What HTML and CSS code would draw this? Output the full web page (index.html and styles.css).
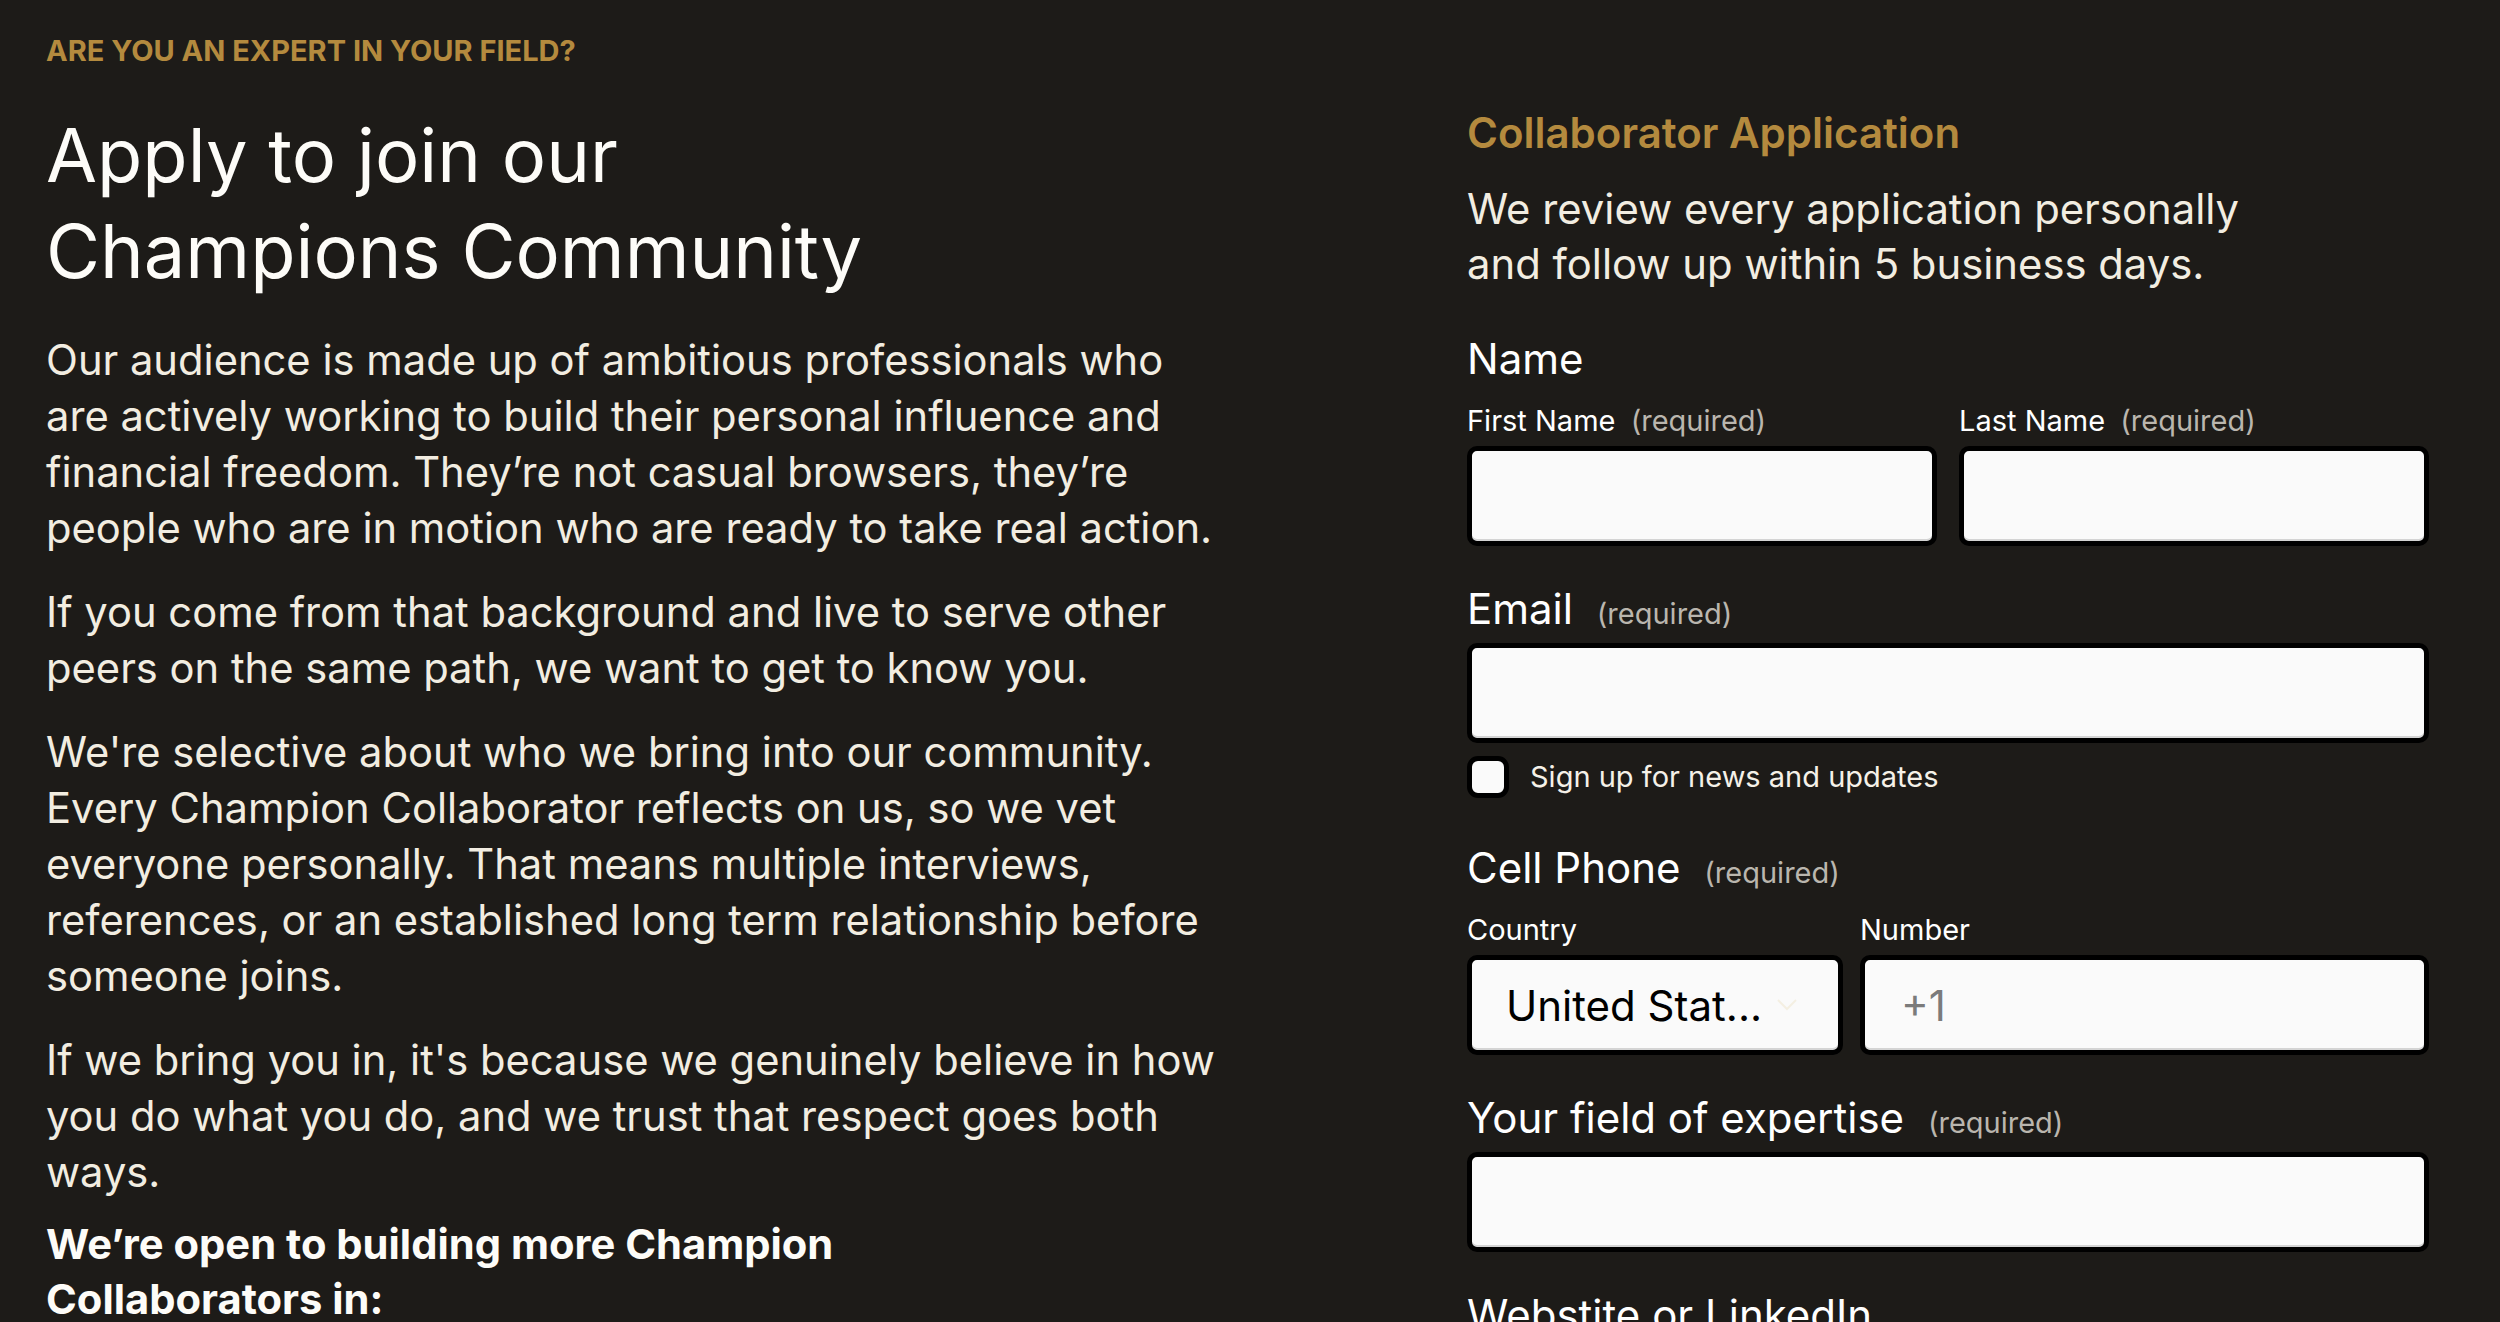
FILE: index.html
```html
<!DOCTYPE html>
<html lang="en">
<head>
<meta charset="utf-8">
<title>Apply to join our Champions Community</title>
<link rel="stylesheet" href="styles.css">
</head>
<body>
<main class="page">
  <section class="intro">
    <p class="eyebrow">ARE YOU AN EXPERT IN YOUR FIELD?</p>
    <h1 class="title">Apply to join our Champions Community</h1>
    <p class="copy">Our audience is made up of ambitious professionals who are actively working to build their personal influence and financial freedom. They’re not casual browsers, they’re people who are in motion who are ready to take real action.</p>
    <p class="copy">If you come from that background and live to serve other peers on the same path, we want to get to know you.</p>
    <p class="copy">We're selective about who we bring into our community. Every Champion Collaborator reflects on us, so we vet everyone personally. That means multiple interviews, references, or an established long term relationship before someone joins.</p>
    <p class="copy">If we bring you in, it's because we genuinely believe in how you do what you do, and we trust that respect goes both ways.</p>
    <h3 class="subhead">We’re open to building more Champion Collaborators in:</h3>
  </section>

  <section class="apply">
    <h2 class="apply-title">Collaborator Application</h2>
    <p class="apply-intro">We review every application personally and follow up within 5 business days.</p>

    <form class="form">
      <div class="field">
        <div class="field-label">Name</div>
        <div class="pair pair-name">
          <label class="sub">
            <span class="sub-label">First Name <span class="req">(required)</span></span>
            <input class="box" type="text">
          </label>
          <label class="sub">
            <span class="sub-label">Last Name <span class="req">(required)</span></span>
            <input class="box" type="text">
          </label>
        </div>
      </div>

      <div class="field">
        <label class="field-label" for="email">Email <span class="req">(required)</span></label>
        <input class="box" id="email" type="email">
        <label class="check">
          <span class="check-box"></span>
          <span class="check-text">Sign up for news and updates</span>
        </label>
      </div>

      <div class="field field-phone">
        <div class="field-label">Cell Phone <span class="req">(required)</span></div>
        <div class="pair pair-phone">
          <div class="sub">
            <span class="sub-label">Country</span>
            <div class="box select">
              <span class="select-text">United Stat...</span>
              <svg class="chev" width="22" height="14" viewBox="0 0 22 14" aria-hidden="true"><path d="M2 2l9 9 9-9" fill="none" stroke="#f4efe2" stroke-width="2"/></svg>
            </div>
          </div>
          <label class="sub">
            <span class="sub-label">Number</span>
            <input class="box phone" type="tel" placeholder="+1">
          </label>
        </div>
      </div>

      <div class="field">
        <label class="field-label" for="expertise">Your field of expertise <span class="req">(required)</span></label>
        <input class="box" id="expertise" type="text">
      </div>

      <div class="field">
        <label class="field-label" for="site">Webstite or LinkedIn</label>
        <input class="box" id="site" type="text">
      </div>
    </form>
  </section>
</main>
</body>
</html>
```

FILE: styles.css
```css
* { box-sizing: border-box; }

html, body {
  margin: 0;
  background: #1d1b18;
}

body {
  font-family: Inter, "Noto Sans", "Liberation Sans", sans-serif;
  color: #f2ede1;
  overflow: hidden;
  height: 1322px;
}

.page {
  display: grid;
  grid-template-columns: 1180px 962px;
  column-gap: 241px;
  padding: 33px 71px 0 46px;
}

/* left column */
.eyebrow {
  margin: 0;
  font-size: 29px;
  line-height: 36px;
  font-weight: 700;
  color: #b48a3e;
}

.title {
  margin: 38px 0 0;
  max-width: 900px;
  font-size: 74px;
  line-height: 96px;
  font-weight: 400;
  color: #fdfcf8;
}

.copy {
  margin: 28px 0 0;
  font-size: 41.7px;
  line-height: 56px;
  font-weight: 400;
}

.title + .copy { margin-top: 33px; }

.subhead {
  margin: 17px 0 0;
  max-width: 860px;
  font-size: 41.7px;
  line-height: 55px;
  font-weight: 700;
  color: #fdfcf8;
}

/* right column */
.apply { padding-top: 75px; }

.apply-title {
  margin: 0;
  font-size: 42px;
  line-height: 50px;
  font-weight: 600;
  color: #b48a3e;
}

.apply-intro {
  margin: 24px 0 0;
  max-width: 820px;
  font-size: 41.8px;
  line-height: 55px;
}

.form { margin-top: 44px; }

.field { margin-top: 40px; }
.field:first-child { margin-top: 0; }
.field-phone { margin-top: 47px; }

.field-label {
  display: block;
  font-size: 42px;
  line-height: 46px;
  color: #fff;
  margin-bottom: 11px;
}

.req {
  font-size: 29px;
  line-height: 1;
  color: #bab6ae;
  margin-left: 12px;
}

.pair {
  display: grid;
  margin-top: 22px;
}
.pair-name { grid-template-columns: 1fr 1fr; column-gap: 22px; }
.pair-phone { grid-template-columns: 376px 1fr; column-gap: 17px; }

.sub {
  display: flex;
  flex-direction: column;
}

.sub-label {
  font-size: 29px;
  line-height: 34px;
  color: #fff;
  margin-bottom: 8px;
}
.sub-label .req { margin-left: 7px; }

.box {
  display: block;
  width: 100%;
  height: 100px;
  margin: 0;
  border: 5px solid #000;
  border-radius: 10px;
  background: #fafafa;
  box-shadow: inset 0 -2px 0 #d4d4d4;
  font-family: inherit;
  font-size: 42px;
  color: #111;
  outline: none;
}

.select {
  display: flex;
  align-items: center;
  justify-content: space-between;
  padding: 0 40px 0 34px;
}
.select-text { color: #000; white-space: nowrap; }

.phone { padding: 0 0 0 36px; }
.phone::placeholder { color: #7b7b7b; }

.check {
  display: flex;
  align-items: center;
  gap: 21px;
  margin-top: 13px;
}

.check-box {
  width: 42px;
  height: 42px;
  border: 5px solid #000;
  border-radius: 11px;
  background: #fafafa;
  flex: none;
}

.check-text {
  font-size: 29px;
  line-height: 36px;
  color: #f5f1e8;
}
```
